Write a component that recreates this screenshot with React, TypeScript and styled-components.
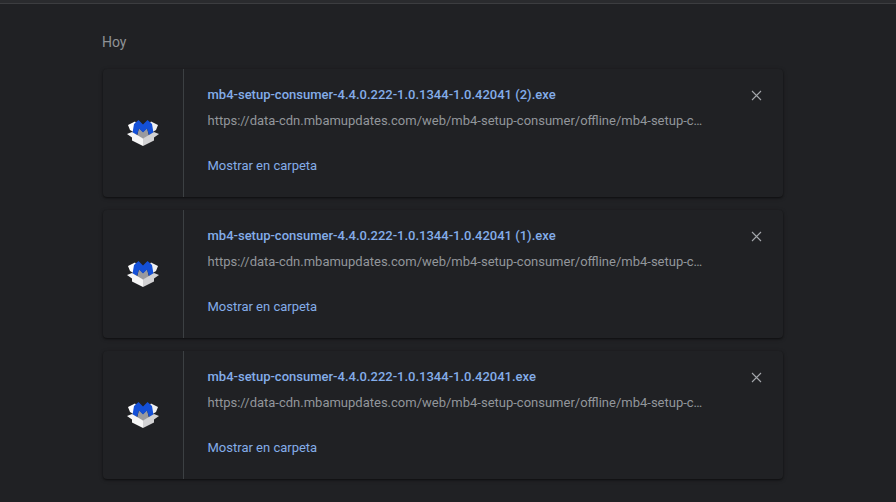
import React from "react";
import styled, { createGlobalStyle } from "styled-components";

const Global = createGlobalStyle`
  html, body { margin: 0; padding: 0; background: #202124; }
  body { font-family: Roboto, "Liberation Sans", sans-serif; overflow: hidden; }
`;

const Page = styled.div`
  width: 896px;
  height: 502px;
  overflow: hidden;
  background: #202124;
`;
const TopBar = styled.div`
  height: 3px;
  background: #2a2b2e;
  border-bottom: 1px solid #3c3d40;
`;
const Content = styled.main`
  width: 680px;
  margin-left: 103px;
  display: flex;
  flex-direction: column;
`;
const DateLabel = styled.h2`
  margin: 0 0 0 -1px;
  padding-top: 30px;
  height: 35px;
  line-height: 16px;
  font-size: 14px;
  font-weight: 400;
  color: #8f9296;
`;
const List = styled.div`
  display: flex;
  flex-direction: column;
  gap: 13px;
`;
const Card = styled.article`
  display: flex;
  height: 128px;
  background: #202124;
  border-radius: 4px;
  box-shadow: 0 1px 2px rgba(0, 0, 0, 0.45), 0 1px 4px rgba(0, 0, 0, 0.25);
`;
const IconCell = styled.div`
  width: 81px;
  flex: none;
  display: flex;
  align-items: center;
  justify-content: center;
  border-right: 1px solid #3c4043;
  padding-bottom: 2px;
  box-sizing: border-box;
`;
const Body = styled.div`
  flex: 1;
  min-width: 0;
  padding: 17px 0 0 23.5px;
  display: flex;
  flex-direction: column;
`;
const Title = styled.a`
  font-size: 13px;
  font-weight: 500;
  line-height: 17px;
  color: #84ade9;
  white-space: nowrap;
`;
const Url = styled.div`
  margin-top: 9px;
  font-size: 13px;
  line-height: 17px;
  color: #92969b;
  white-space: nowrap;
`;
const Action = styled.a`
  margin-top: 28px;
  font-size: 13px;
  line-height: 17px;
  color: #84ade9;
`;
const CloseCell = styled.div`
  width: 32px;
  flex: none;
  padding-top: 20px;
  box-sizing: border-box;
`;
const CloseButton = styled.button`
  display: block;
  padding: 0;
  border: 0;
  background: none;
  width: 11px;
  height: 11px;
  color: #a4a7ab;
`;

const BoxIcon = () => (
  <svg width="32" height="27" viewBox="0 0 32 27" aria-hidden="true">
    <path d="M1 6 L8 2.5 L12 8 L8 14 L3 11 Z" fill="#ffffff" />
    <path d="M31 6 L24 2.5 L20 8 L24 14 L29 11 Z" fill="#f0f0f0" />
    <path d="M12 9 L16 13 L20 9 L22 17 L16 20 L10 17 Z" fill="#9a9a9e" />
    <path d="M7 5 L11.5 1 L16 5.5 L20.5 1 L25 5 L26.5 14 L22 16 L20 9.5 L16 13.5 L12 9.5 L10 16 L5.5 14 Z" fill="#1450d8" />
    <path d="M16 19.5 L27 13 L32 15 L27 18.5 L27 21.5 L16 27 Z" fill="#d2d2d4" />
    <path d="M16 19.5 L5 13 L0 15 L5 18.5 L5 21.5 L16 27 Z" fill="#f6f6f6" />
  </svg>
);

const CloseIcon = () => (
  <svg width="11" height="11" viewBox="0 0 11 11" aria-hidden="true">
    <path d="M1 1 L10 10 M10 1 L1 10" stroke="currentColor" strokeWidth="1.1" fill="none" />
  </svg>
);

const files = [
  "mb4-setup-consumer-4.4.0.222-1.0.1344-1.0.42041 (2).exe",
  "mb4-setup-consumer-4.4.0.222-1.0.1344-1.0.42041 (1).exe",
  "mb4-setup-consumer-4.4.0.222-1.0.1344-1.0.42041.exe",
];

export default function App() {
  return (
    <Page>
      <Global />
      <TopBar />
      <Content>
        <DateLabel>Hoy</DateLabel>
        <List>
          {files.map((name) => (
            <Card key={name}>
              <IconCell>
                <BoxIcon />
              </IconCell>
              <Body>
                <Title>{name}</Title>
                <Url>https://data-cdn.mbamupdates.com/web/mb4-setup-consumer/offline/mb4-setup-c…</Url>
                <Action>Mostrar en carpeta</Action>
              </Body>
              <CloseCell>
                <CloseButton aria-label="Quitar">
                  <CloseIcon />
                </CloseButton>
              </CloseCell>
            </Card>
          ))}
        </List>
      </Content>
    </Page>
  );
}
